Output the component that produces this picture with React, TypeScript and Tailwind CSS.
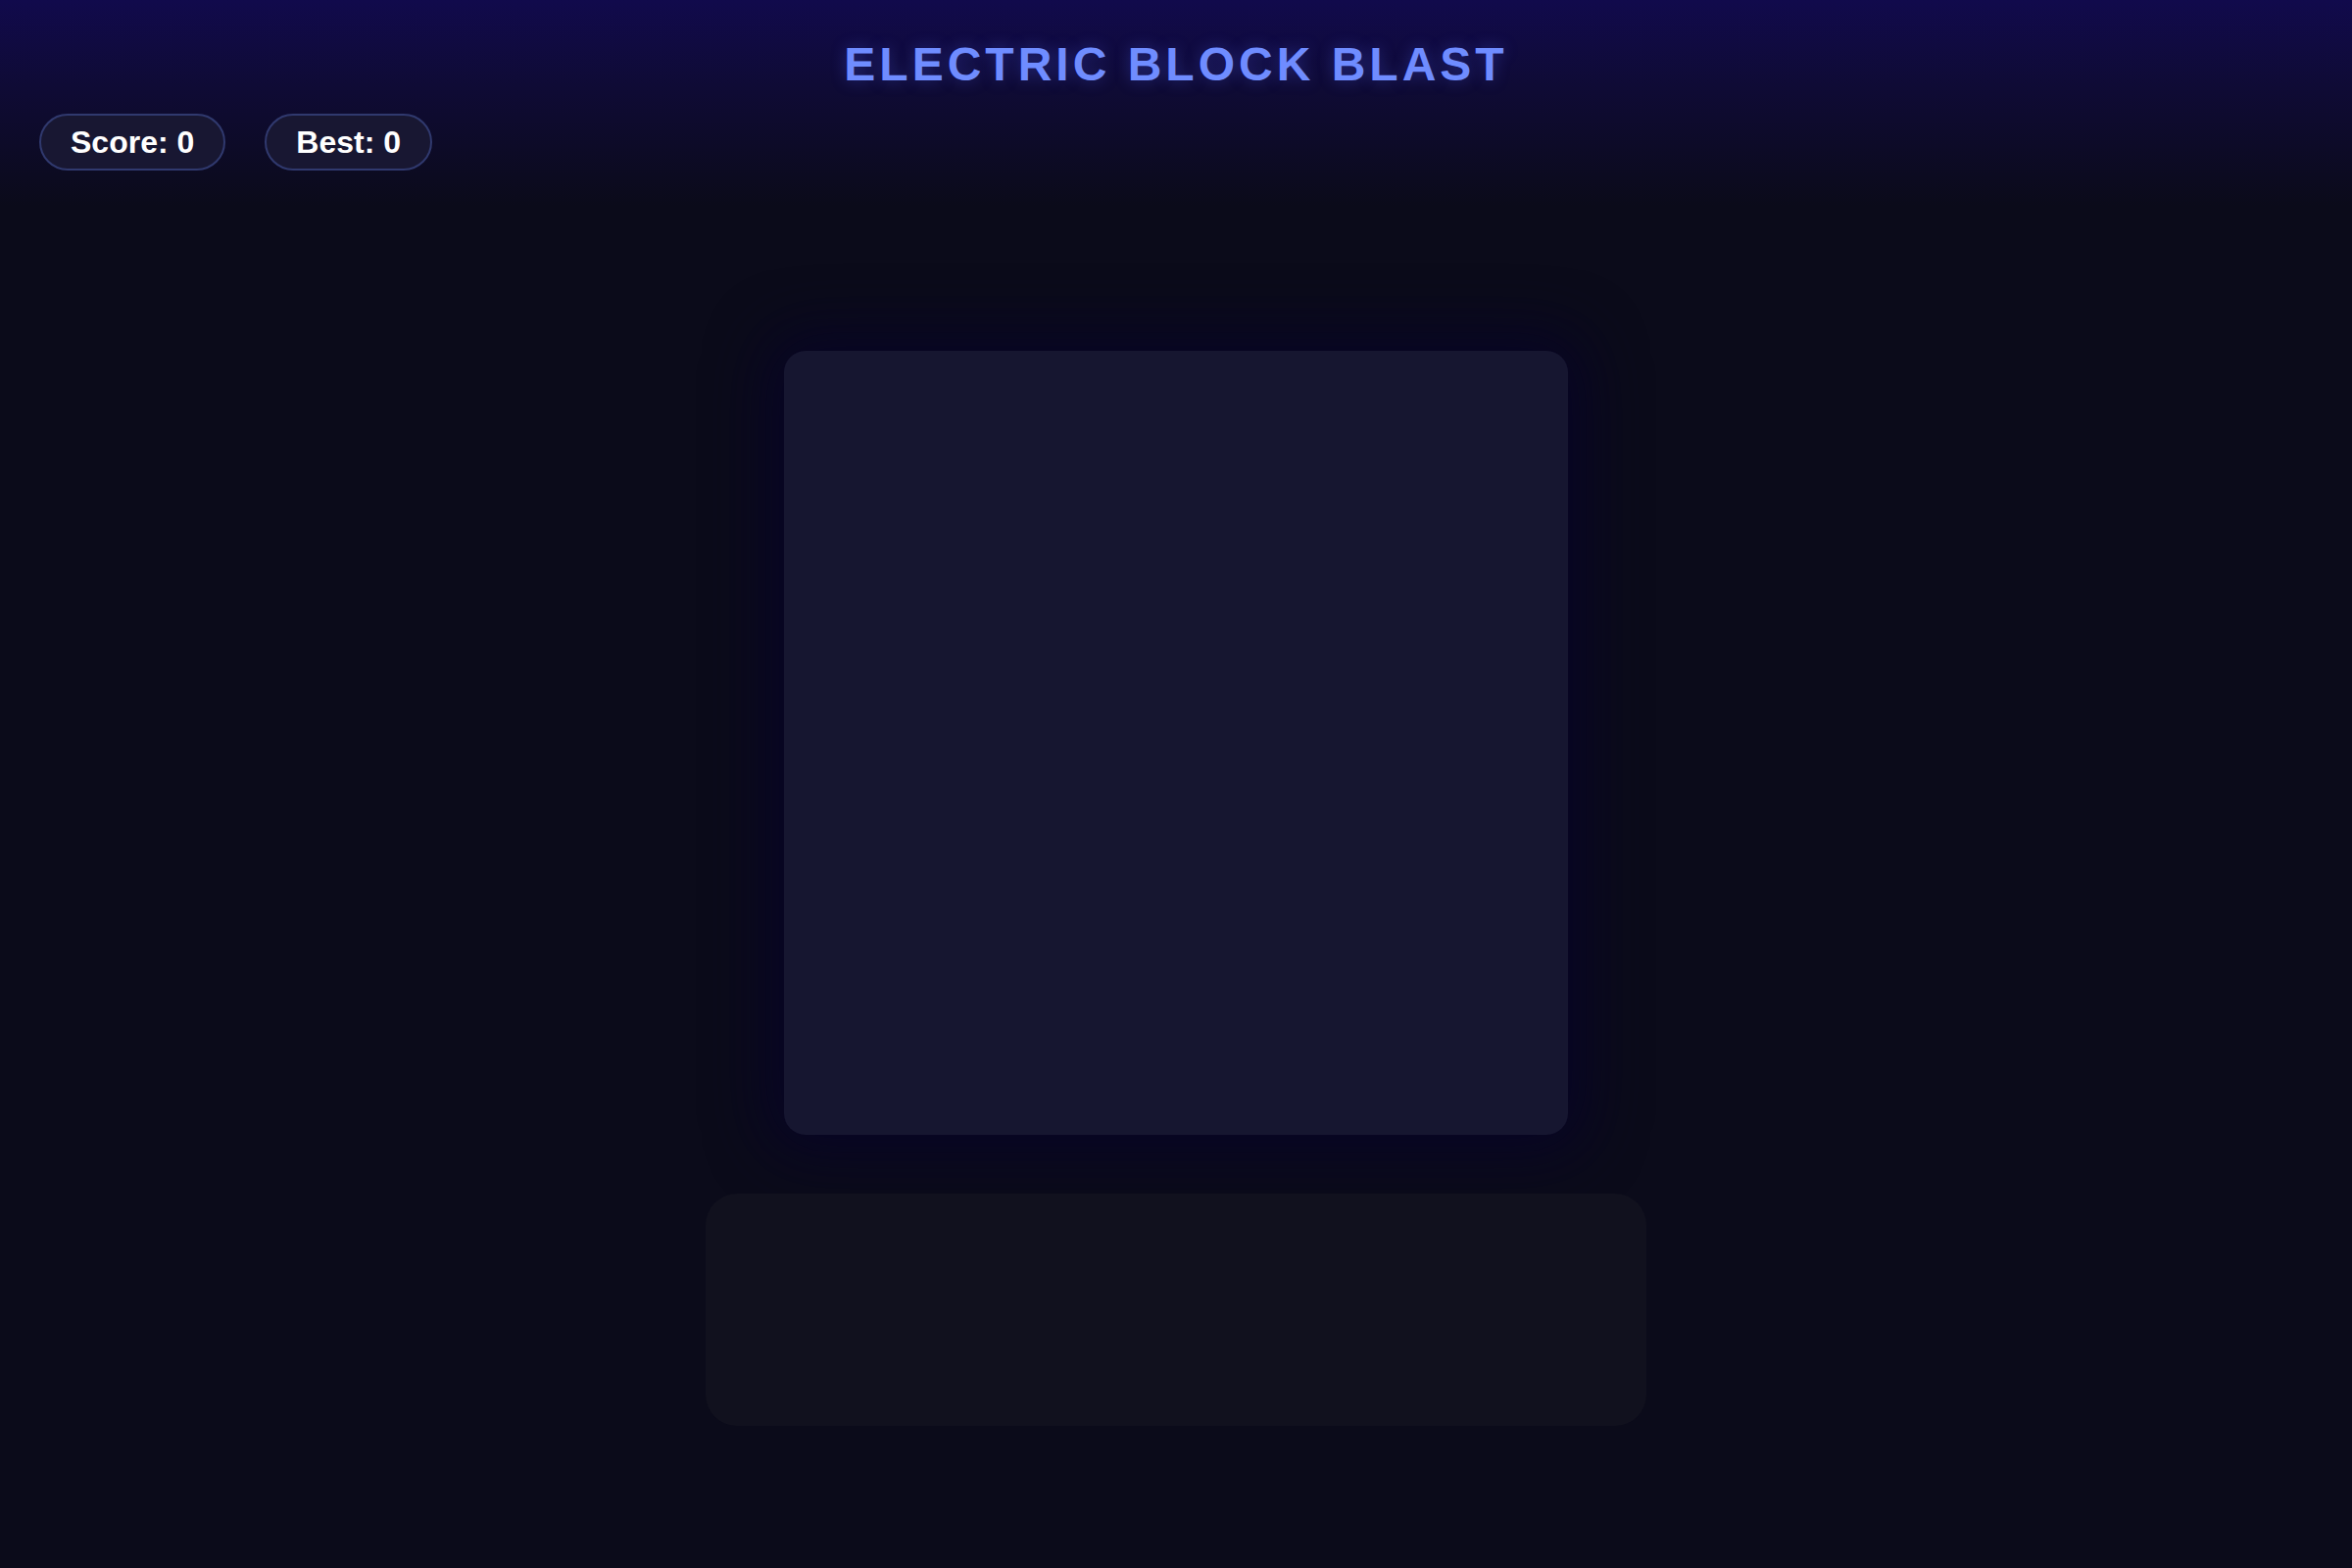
import React from "react";

export default function App() {
  return (
    <div
      className="min-h-[1600px] w-full bg-[#0b0b1a] bg-[linear-gradient(to_bottom,#110a4c_0px,#0f0b35_90px,#0b0b1a_210px,#0b0b1a_100%)]"
      style={{ fontFamily: '"Liberation Sans", Arial, sans-serif' }}
    >
      <header className="flex flex-col">
        <h1 className="pt-[38px] text-center text-[48px] font-bold leading-[55px] tracking-[4px] text-[#6f8cff] [text-shadow:0_0_16px_rgba(80,100,255,0.35)]">
          ELECTRIC BLOCK BLAST
        </h1>
        <div className="mt-[23px] flex gap-[40px] pl-[40px]">
          <div className="flex h-[58px] items-center rounded-full border-2 border-[#30396e] bg-[#181732] px-[30px] text-[32px] font-bold text-white">
            Score: 0
          </div>
          <div className="flex h-[58px] items-center rounded-full border-2 border-[#30396e] bg-[#181732] px-[30px] text-[32px] font-bold text-white">
            Best: 0
          </div>
        </div>
      </header>
      <main className="mt-[184px] flex flex-col items-center gap-[60px]">
        <div className="h-[800px] w-[800px] rounded-[22px] bg-[#161630] shadow-[0_0_60px_18px_rgba(7,4,38,0.95)]" />
        <div className="h-[237px] w-[960px] rounded-[32px] bg-[#11111e]" />
      </main>
    </div>
  );
}
